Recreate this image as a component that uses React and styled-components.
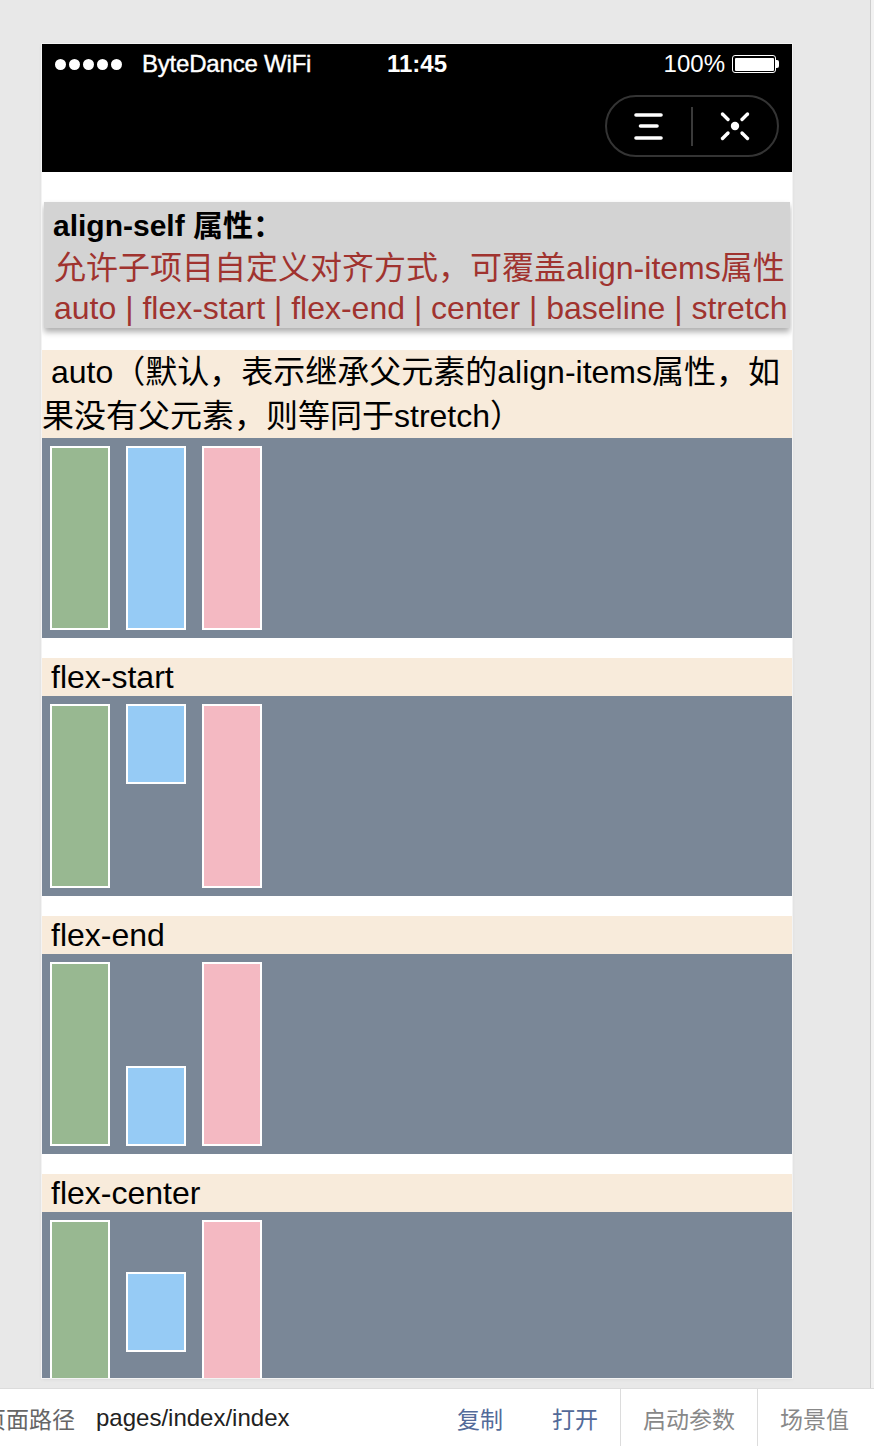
import React from 'react';
import styled, { createGlobalStyle } from 'styled-components';

const GlobalStyle = createGlobalStyle`
  html, body {
    margin: 0;
    padding: 0;
  }
  body {
    background: #e8e8e8;
    font-family: "Liberation Sans", "Noto Sans CJK SC", sans-serif;
    overflow: hidden;
  }
`;

const Page = styled.div`
  width: 874px;
  height: 1446px;
  display: flex;
  flex-direction: column;
  overflow: hidden;
`;

const Stage = styled.div`
  flex: 1;
  display: flex;
  min-height: 0;
`;

const Workspace = styled.div`
  width: 871px;
  box-sizing: border-box;
  padding: 44px 0 0 42px;
  border-right: 1px solid #cdcdcd;
`;

const SidePanel = styled.div`
  flex: 1;
  background: #f2f2f2;
`;

const Phone = styled.div`
  width: 750px;
  height: 1334px;
  display: flex;
  flex-direction: column;
  background: #fff;
  overflow: hidden;
  box-shadow: 0 0 0 1px #f3f3f3, 0 1px 4px rgba(0, 0, 0, 0.08);
`;

/* ---------- header ---------- */

const Header = styled.div`
  height: 128px;
  flex-shrink: 0;
  background: #000;
  display: flex;
  flex-direction: column;
`;

const StatusBar = styled.div`
  height: 40px;
  display: grid;
  grid-template-columns: 1fr auto 1fr;
  align-items: center;
  padding: 0 13px;
  color: #fff;
  font-size: 24px;
`;

const StatusLeft = styled.div`
  display: flex;
  align-items: center;
`;

const Dots = styled.div`
  display: flex;
  gap: 3px;
  margin-right: 20px;
`;

const Dot = styled.span`
  width: 11px;
  height: 11px;
  border-radius: 50%;
  background: #fff;
`;

const Carrier = styled.span`
  -webkit-text-stroke: 0.4px #fff;
  letter-spacing: -0.2px;
`;

const Clock = styled.span`
  font-weight: bold;
`;

const StatusRight = styled.div`
  justify-self: end;
  display: flex;
  align-items: center;
  gap: 7px;
`;

const Percent = styled.span`
  font-weight: 300;
`;

const Battery = styled.div`
  display: flex;
  align-items: center;
`;

const BatteryBody = styled.div`
  width: 44px;
  height: 18px;
  box-sizing: border-box;
  border: 1.5px solid #fff;
  border-radius: 3px;
  padding: 1.5px;
  display: flex;
`;

const BatteryFill = styled.div`
  flex: 1;
  background: #fff;
  border-radius: 1px;
`;

const BatteryNub = styled.div`
  width: 3px;
  height: 8px;
  background: #fff;
  border-radius: 0 2px 2px 0;
`;

const NavBar = styled.div`
  flex: 1;
  display: flex;
  justify-content: flex-end;
  align-items: flex-start;
  padding: 11px 13px 0 0;
`;

const Capsule = styled.div`
  width: 174px;
  height: 62px;
  box-sizing: border-box;
  border: 2px solid #343434;
  border-radius: 31px;
  display: flex;
  align-items: center;
`;

const CapsuleHalf = styled.div`
  flex: 1;
  display: flex;
  justify-content: center;
  align-items: center;
`;

const CapsuleDivider = styled.div`
  width: 2px;
  height: 39px;
  background: #3a3a3a;
`;

const MenuIcon = () => (
  <svg width="30" height="30" viewBox="0 0 30 30">
    <g stroke="#fff" strokeWidth="3.6" strokeLinecap="round">
      <line x1="2" y1="4" x2="27" y2="4" />
      <line x1="6.5" y1="15" x2="23" y2="15" />
      <line x1="2" y1="27" x2="27" y2="27" />
    </g>
  </svg>
);

const CloseIcon = () => (
  <svg width="30" height="30" viewBox="0 0 30 30">
    <g stroke="#fff" strokeWidth="3.4" strokeLinecap="round">
      <line x1="2.5" y1="3" x2="8" y2="8.5" />
      <line x1="27.5" y1="3" x2="22" y2="8.5" />
      <line x1="2.5" y1="27.5" x2="8" y2="22" />
      <line x1="27.5" y1="27.5" x2="22" y2="22" />
    </g>
    <circle cx="15" cy="15" r="4.2" fill="#fff" />
  </svg>
);

/* ---------- content ---------- */

const Content = styled.div`
  flex: 1;
  overflow: hidden;
  padding-top: 30px;
  color: #000;
`;

const Card = styled.div`
  margin: 0 2px 22px;
  padding: 2px 9px 0;
  background: #d3d3d3;
  box-shadow: 0 4px 6px rgba(0, 0, 0, 0.32);
`;

const CardTitle = styled.div`
  font-size: 30px;
  font-weight: bold;
  line-height: 44px;
`;

const CardHint = styled.div`
  font-size: 32px;
  line-height: 40px;
  color: #a0332f;
  white-space: nowrap;
  padding-left: 1px;
`;

const Description = styled.div`
  background: #f8ebdb;
  font-size: 32px;
  line-height: 44px;
  text-indent: 9px;
`;

const Label = styled.div`
  margin-top: 20px;
  height: 38px;
  background: #f8ebdb;
  font-size: 32px;
  line-height: 38px;
  text-indent: 9px;
`;

const Demo = styled.div`
  height: 200px;
  flex-shrink: 0;
  background: #7a8797;
  display: flex;
  align-items: stretch;
`;

const Item = styled.div`
  width: 60px;
  box-sizing: border-box;
  margin: 8px;
  border: 2px solid #fff;
  background: ${({ color }) => color};
  align-self: ${({ self }) => self || 'auto'};
  ${({ short }) => short && 'height: 80px;'}
`;

const GREEN = '#98b891';
const BLUE = '#96cbf5';
const PINK = '#f4b9c2';

const DemoRow = ({ self }) => (
  <Demo>
    <Item color={GREEN} />
    <Item color={BLUE} self={self} short={!!self} />
    <Item color={PINK} />
  </Demo>
);

/* ---------- bottom bar ---------- */

const BottomBar = styled.div`
  height: 58px;
  flex-shrink: 0;
  box-sizing: border-box;
  border-top: 1px solid #dcdcdc;
  background: #fff;
  display: flex;
  font-size: 23px;
  white-space: nowrap;
`;

const PathGroup = styled.div`
  flex: 1;
  display: flex;
  align-items: center;
  padding-right: 22px;
  overflow: hidden;
`;

const PathLabel = styled.span`
  margin-left: -17px;
  color: #666;
`;

const PathValue = styled.span`
  margin-left: 21px;
  font-size: 24px;
  color: #222;
`;

const Action = styled.span`
  color: #536a99;
  margin-left: ${({ first }) => (first ? 'auto' : '49px')};
`;

const Cell = styled.div`
  display: flex;
  align-items: center;
  padding: 0 ${({ last }) => (last ? '25px' : '22px')} 0 22px;
  border-left: 1px solid #dcdcdc;
  color: #888;
`;

export default function App() {
  return (
    <>
      <GlobalStyle />
      <Page>
        <Stage>
          <Workspace>
            <Phone>
              <Header>
                <StatusBar>
                  <StatusLeft>
                    <Dots>
                      <Dot />
                      <Dot />
                      <Dot />
                      <Dot />
                      <Dot />
                    </Dots>
                    <Carrier>ByteDance WiFi</Carrier>
                  </StatusLeft>
                  <Clock>11:45</Clock>
                  <StatusRight>
                    <Percent>100%</Percent>
                    <Battery>
                      <BatteryBody>
                        <BatteryFill />
                      </BatteryBody>
                      <BatteryNub />
                    </Battery>
                  </StatusRight>
                </StatusBar>
                <NavBar>
                  <Capsule>
                    <CapsuleHalf>
                      <MenuIcon />
                    </CapsuleHalf>
                    <CapsuleDivider />
                    <CapsuleHalf>
                      <CloseIcon />
                    </CapsuleHalf>
                  </Capsule>
                </NavBar>
              </Header>

              <Content>
                <Card>
                  <CardTitle>align-self 属性：</CardTitle>
                  <CardHint>允许子项目自定义对齐方式，可覆盖align-items属性</CardHint>
                  <CardHint>auto | flex-start | flex-end | center | baseline | stretch</CardHint>
                </Card>

                <Description>
                  auto（默认，表示继承父元素的align-items属性，如果没有父元素，则等同于stretch）
                </Description>
                <DemoRow />

                <Label>flex-start</Label>
                <DemoRow self="flex-start" />

                <Label>flex-end</Label>
                <DemoRow self="flex-end" />

                <Label>flex-center</Label>
                <DemoRow self="center" />
              </Content>
            </Phone>
          </Workspace>
          <SidePanel />
        </Stage>

        <BottomBar>
          <PathGroup>
            <PathLabel>页面路径</PathLabel>
            <PathValue>pages/index/index</PathValue>
            <Action first>复制</Action>
            <Action>打开</Action>
          </PathGroup>
          <Cell>启动参数</Cell>
          <Cell last>场景值</Cell>
        </BottomBar>
      </Page>
    </>
  );
}
